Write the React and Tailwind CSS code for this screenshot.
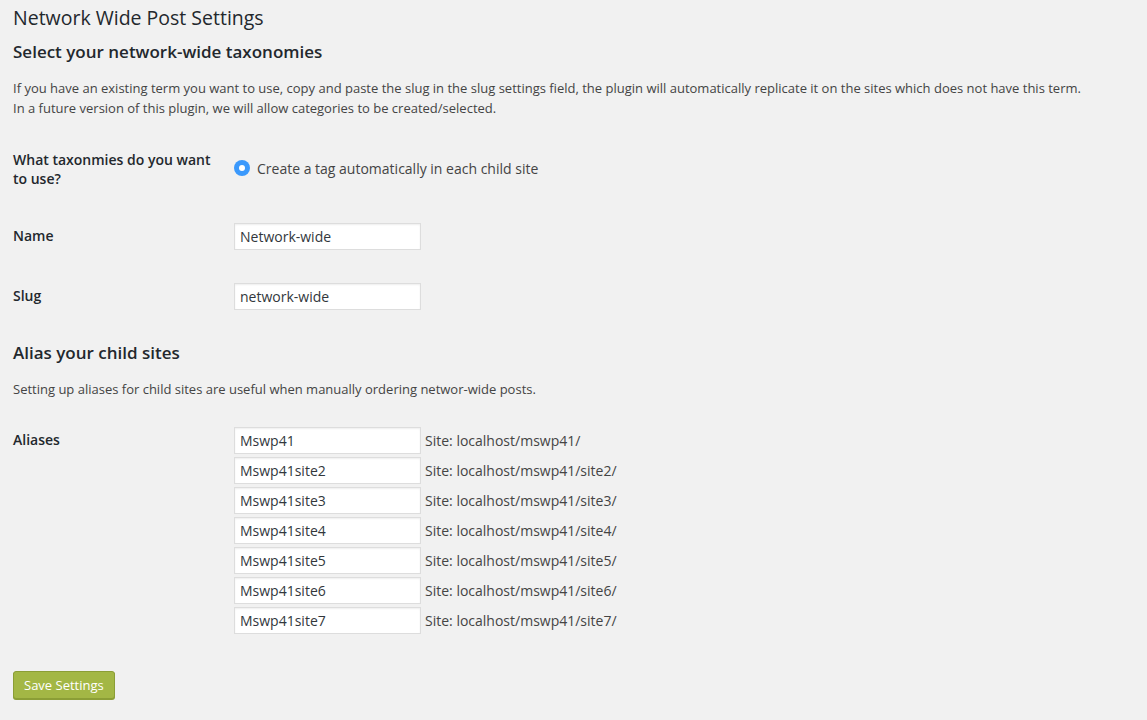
import React from "react";

const sites = [
    ["Mswp41", "localhost/mswp41/"],
    ["Mswp41site2", "localhost/mswp41/site2/"],
    ["Mswp41site3", "localhost/mswp41/site3/"],
    ["Mswp41site4", "localhost/mswp41/site4/"],
    ["Mswp41site5", "localhost/mswp41/site5/"],
    ["Mswp41site6", "localhost/mswp41/site6/"],
    ["Mswp41site7", "localhost/mswp41/site7/"],
];

function TextInput({ value }) {
    return (
        <input
            type="text"
            defaultValue={value}
            className="w-[187px] h-[27px] px-[5px] bg-white border border-[#dddddd] shadow-[inset_0_1px_2px_rgba(0,0,0,0.07)] text-[14px] text-[#32373c] outline-none"
        />
    );
}

function Row({ label, children, className = "" }) {
    return (
        <div className={"flex " + className}>
            <div className="w-[210px] shrink-0 pr-[10px] pt-[20px] text-[14px] leading-[19px] font-semibold text-[#23282d]">
                {label}
            </div>
            <div className="pl-[11px] flex items-center">{children}</div>
        </div>
    );
}

export default function App() {
    return (
        <div
            className="min-h-screen bg-[#f1f1f1] px-[13px] pt-[6px] text-[#444444]"
            style={{ fontFamily: '"Open Sans", "Noto Sans", sans-serif' }}
        >
            <h2 className="text-[19.5px] leading-[24px] font-normal text-[#23282d]">
                Network Wide Post Settings
            </h2>

            <h3 className="mt-[11px] text-[17px] leading-[22px] font-semibold text-[#23282d]">
                Select your network-wide taxonomies
            </h3>
            <p className="mt-[15px] text-[13px] leading-[20px]">
                If you have an existing term you want to use, copy and paste the slug in the slug settings field, the plugin will automatically replicate it on the sites which does not have this term.
                <br />
                In a future version of this plugin, we will allow categories to be created/selected.
            </p>

            <Row label={<>What taxonmies do you want<br />to use?</>} className="mt-[12px] h-[76px]">
                <label className="flex items-center gap-[7px] text-[14px]">
                    <span className="w-[16px] h-[16px] rounded-full bg-[#3b99fc] flex items-center justify-center">
                        <span className="w-[6px] h-[6px] rounded-full bg-white" />
                    </span>
                    Create a tag automatically in each child site
                </label>
            </Row>

            <Row label="Name" className="h-[60px]">
                <TextInput value="Network-wide" />
            </Row>
            <Row label="Slug" className="h-[60px]">
                <TextInput value="network-wide" />
            </Row>

            <h3 className="mt-[16px] text-[17px] leading-[22px] font-semibold text-[#23282d]">
                Alias your child sites
            </h3>
            <p className="mt-[15px] text-[13px] leading-[20px]">
                Setting up aliases for child sites are useful when manually ordering networ-wide posts.
            </p>

            <div className="flex mt-[11px]">
                <div className="w-[210px] shrink-0 pr-[10px] pt-[20px] text-[14px] leading-[19px] font-semibold text-[#23282d]">
                    Aliases
                </div>
                <div className="pl-[11px] pt-[17px] flex flex-col gap-[3px]">
                    {sites.map(([alias, url]) => (
                        <div key={alias} className="flex items-center gap-[4px]">
                            <TextInput value={alias} />
                            <span className="text-[14px]">Site: {url}</span>
                        </div>
                    ))}
                </div>
            </div>

            <div className="mt-[37px] pb-[21px]">
                <button
                    type="button"
                    className="h-[28px] px-[10px] rounded-[3px] bg-[#a3b745] border border-[#8b9e36] shadow-[0_1px_0_#8b9e36] text-white text-[13px] leading-[26px]"
                >
                    Save Settings
                </button>
            </div>
        </div>
    );
}
